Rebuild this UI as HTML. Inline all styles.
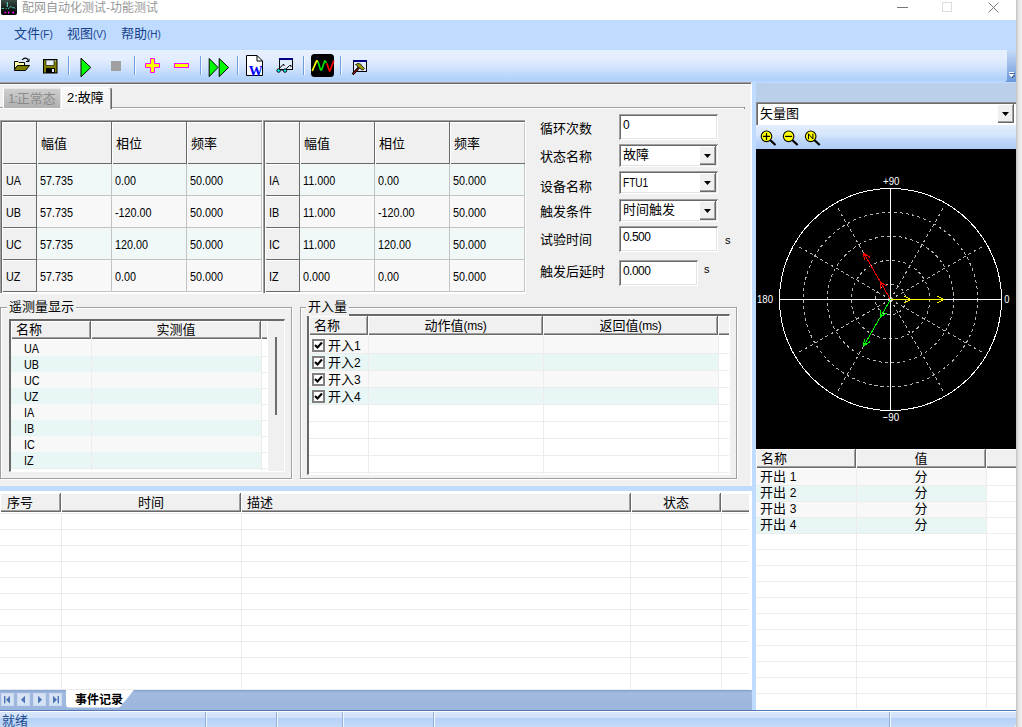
<!DOCTYPE html><html lang="zh-CN"><head><meta charset="utf-8"><title>配网自动化测试-功能测试</title><style>
html,body{margin:0;padding:0}
body{width:1022px;height:727px;overflow:hidden;background:#f0f0f0;position:relative;font-family:"Liberation Sans","Noto Sans CJK SC",sans-serif;font-size:13px;color:#000}
.a{position:absolute;box-sizing:border-box}
.t{white-space:nowrap}
.n{font-size:12px;letter-spacing:-0.6px}
.nx{font-size:12px;transform:scaleX(0.9);transform-origin:0 50%}
.hd{background:#f0f0f0;box-shadow:inset 1px 0 0 #fff,inset -1px 0 0 #696969,inset 0 1px 0 #fff,inset 0 -1px 0 #696969,inset -2px 0 0 #a0a0a0,inset 0 -2px 0 #a0a0a0}
.hdf{background:#f0f0f0;box-shadow:inset 1px 1px 0 #fff,inset 0 -1px 0 #696969,inset 0 -2px 0 #a0a0a0}
.hcl{background:#f0f0f0;box-shadow:inset 1px 1px 0 #fff,inset 0 -1px 0 #696969,inset -1px 0 0 #c3c3c3}
.hc{background:#f0f0f0;box-shadow:inset 1px 0 0 #fff,inset -1px 0 0 #696969,inset 0 1px 0 #fff,inset 0 -1px 0 #696969}
.sunk{background:#fff;box-shadow:inset 1px 1px 0 #a0a0a0,inset -1px -1px 0 #fff,inset 2px 2px 0 #696969,inset -2px -2px 0 #e3e3e3}
.btn{background:#f0f0f0;box-shadow:inset 1px 0 0 #fff,inset -1px 0 0 #696969,inset 0 1px 0 #fff,inset 0 -1px 0 #696969,inset -2px 0 0 #a0a0a0,inset 0 -2px 0 #a0a0a0}
.c0{background:#f0f8f8}
.c1{background:#f8f8f8}
.r0{background:#f8f8f8}
.r1{background:#e9f6f6}
.gl{background:#ececec}
.mi{color:#15428b}
.mi small{font-size:10px}
</style></head><body>
<div class="a " style="left:1016px;top:0px;width:6px;height:727px;background:linear-gradient(90deg,#bcbcbc 0,#d8d8d8 1.5px,#e8e8e8 3px,#eeeeee 6px)"></div>
<div class="a " style="left:0px;top:0px;width:1016px;height:20px;background:#fff"></div>
<svg class="a" style="left:1px;top:0" width="16" height="15" viewBox="0 0 16 15"><defs><linearGradient id="ig" x1="0" y1="0" x2="0" y2="1"><stop offset="0" stop-color="#3b4b46"/><stop offset="0.6" stop-color="#101a17"/><stop offset="1" stop-color="#000"/></linearGradient></defs><path d="M0 0H16V13Q16 15 14 15H2Q0 15 0 13Z" fill="url(#ig)"/><path d="M6.3 2V7" stroke="#6fe0d0" stroke-width="1"/><path d="M0.5 8.5H3M4.6 8.5H5.6M7 9L8 8L10 6.2L11.6 8L13 7.4L14.4 8.6" stroke="#5fbfb0" stroke-width="0.9" fill="none"/><path d="M2.8 12.4L5 11.6V13.6ZM7 11.4H8V13.8H7ZM8 12L9 12.6L8 13ZM10.4 12.2L13 11.4V13.8Z" fill="#ff00ff"/></svg>
<div class="a t " style="left:22px;top:0px;height:16px;line-height:16px;font-size:12px;color:#979797">配网自动化测试-功能测试</div>
<div class="a " style="left:897px;top:7px;width:11px;height:1px;background:#777"></div>
<div class="a " style="left:942px;top:2px;width:10px;height:10px;border:1px solid #dcdcdc"></div>
<svg class="a" style="left:988px;top:2px" width="11" height="11" viewBox="0 0 11 11"><path d="M0.5 0.5L10.5 10.5M10.5 0.5L0.5 10.5" stroke="#777" stroke-width="1" fill="none"/></svg>
<div class="a " style="left:0px;top:20px;width:1016px;height:30px;background:#bfdbff"></div>
<div class="a t mi" style="left:14px;top:25px;height:18px;line-height:18px;">文件<small>(F)</small></div>
<div class="a t mi" style="left:67px;top:25px;height:18px;line-height:18px;">视图<small>(V)</small></div>
<div class="a t mi" style="left:121px;top:25px;height:18px;line-height:18px;">帮助<small>(H)</small></div>
<div class="a " style="left:0px;top:50px;width:1016px;height:33px;background:#bfdbff"></div>
<div class="a " style="left:1000px;top:50px;width:16px;height:32px;background:linear-gradient(#c6daf6 0%,#a3c1ec 40%,#6a97db 100%)"></div>
<div class="a " style="left:0px;top:50px;width:1007px;height:32px;background:linear-gradient(#e6f0fe 0%,#e2edfe 30%,#d5e6fd 50%,#c2dafc 72%,#b0d1fc 92%,#b7d5fd 100%);border-radius:0 0 3px 0"></div>
<svg class="a" style="left:1008px;top:71px" width="8" height="8" viewBox="0 0 8 8"><path d="M2 2.5H7M2.5 4.5H6.5L4.5 6.8Z" stroke="#3a5f9f" stroke-width="1" fill="#3a5f9f"/><path d="M1 1.5H6M1.5 3.5H5.5L3.5 5.8Z" stroke="#fff" stroke-width="1" fill="#fff"/></svg>
<svg class="a" style="left:0;top:50px" width="400" height="33" viewBox="0 50 400 33"><rect x="68" y="56" width="1" height="19" fill="#6f9ede"/><rect x="69" y="56" width="1" height="19" fill="#f4f8fe"/><rect x="134" y="56" width="1" height="19" fill="#6f9ede"/><rect x="135" y="56" width="1" height="19" fill="#f4f8fe"/><rect x="200" y="56" width="1" height="19" fill="#6f9ede"/><rect x="201" y="56" width="1" height="19" fill="#f4f8fe"/><rect x="237" y="56" width="1" height="19" fill="#6f9ede"/><rect x="238" y="56" width="1" height="19" fill="#f4f8fe"/><rect x="303" y="56" width="1" height="19" fill="#6f9ede"/><rect x="304" y="56" width="1" height="19" fill="#f4f8fe"/><rect x="340" y="56" width="1" height="19" fill="#6f9ede"/><rect x="341" y="56" width="1" height="19" fill="#f4f8fe"/><path d="M14.5 61.5H18L19 62.5H24.5V65.5H17.5L14.5 69.5Z" fill="#ffffa8" stroke="#000" stroke-width="1"/><path d="M17.5 65.5H29.5L25.5 70.5H14.5V69.5Z" fill="#808000" stroke="#000" stroke-width="1" stroke-linejoin="round"/><path d="M22 60Q24.5 57.2 27 58.6L28.6 61" fill="none" stroke="#000" stroke-width="1.1"/><path d="M26 61.5H29V58.6" fill="none" stroke="#000" stroke-width="1"/><rect x="43.5" y="59.5" width="13.5" height="13.5" fill="#808000" stroke="#000" stroke-width="1"/><rect x="46" y="60" width="8" height="5.5" fill="#e4eefc" stroke="#000" stroke-width="0.6"/><rect x="46" y="68" width="9" height="5" fill="#000"/><rect x="52" y="69" width="2" height="3" fill="#e4eefc"/><rect x="55" y="60.5" width="1" height="1" fill="#e4eefc"/><path d="M81 58.2L90.8 67.5L81 76.8Z" fill="#00ff00" stroke="#000" stroke-width="1" stroke-linejoin="miter"/><rect x="111" y="61" width="10" height="10" fill="#a0a0a0"/><path d="M150.5 58.5H154.5V63.5H159.5V67.5H154.5V72.5H150.5V67.5H145.5V63.5H150.5Z" fill="#ffff00" stroke="#ff00ff" stroke-width="1"/><rect x="174.5" y="63.5" width="14" height="4" fill="#ffff00" stroke="#ff00ff" stroke-width="1"/><path d="M209.2 58.5L218 67.5L209.2 76.6Z" fill="#00ff00" stroke="#000" stroke-width="1"/><path d="M219.2 58.5L228.6 67.5L219.2 76.6Z" fill="#00ff00" stroke="#000" stroke-width="1"/><path d="M246.5 55.5H257L262.5 61V75.5H246.5Z" fill="#fff" stroke="#000" stroke-width="1"/><path d="M257 55.5V61H262.5" fill="none" stroke="#000" stroke-width="1"/><text x="255.8" y="75.6" text-anchor="middle" font-family="Liberation Serif,serif" font-weight="bold" font-size="14" fill="#0000ff">W</text><rect x="279.5" y="58.5" width="13" height="11" fill="#e2edfc" stroke="#000" stroke-width="1"/><rect x="279" y="58" width="14" height="2" fill="#000080"/><path d="M279 69L282.6 64.8L284 64.6V66M285.8 69L289.6 65.6L291 65.4V67" fill="none" stroke="#000" stroke-width="1"/><circle cx="278.6" cy="70.6" r="1.7" fill="#00ffff" stroke="#000" stroke-width="1"/><circle cx="285" cy="70.6" r="1.7" fill="#00ffff" stroke="#000" stroke-width="1"/><path d="M280.4 70H283.2" stroke="#000" stroke-width="1"/><rect x="311" y="54" width="23" height="23" rx="3.5" fill="#000"/><path d="M312.2 71L316.6 60.8L318 61.8" fill="none" stroke="#ffff00" stroke-width="1.7" stroke-linejoin="round"/><path d="M318 61.8L320.6 70L321.6 70L324.8 60.8L326.6 63" fill="none" stroke="#00e000" stroke-width="1.7" stroke-linejoin="round"/><path d="M326.8 63.4L329.4 70.8L330 70.8L333.7 60.8" fill="none" stroke="#ff0000" stroke-width="1.7" stroke-linejoin="round"/><rect x="353.5" y="60.5" width="13" height="11" fill="#e2edfc" stroke="#000" stroke-width="1"/><rect x="353" y="60" width="14" height="2" fill="#000080"/><path d="M352.6 74.4L358.8 67.6" stroke="#000" stroke-width="2.4"/><path d="M353 74L358.6 68" stroke="#c00000" stroke-width="1"/><path d="M355.4 64.6L358 63.4L360.6 64L362 66L364.6 68.6L363 70L361 69.6L360 68L358 67.6L357.2 65.4Z" fill="#999900" stroke="#000" stroke-width="0.7"/></svg>
<div class="a " style="left:0px;top:82px;width:752px;height:404px;background:#f0f0f0;border-top:1px solid #a0a0a0;border-right:1px solid #fff"></div>
<div class="a " style="left:0px;top:83px;width:751px;height:1px;background:#696969"></div>
<div class="a " style="left:0px;top:84px;width:751px;height:1px;background:#f9f9f9"></div>
<div class="a " style="left:750px;top:84px;width:1px;height:402px;background:#f8f8f8"></div>
<div class="a " style="left:0px;top:107px;width:3px;height:1px;background:#a0a0a0"></div>
<div class="a " style="left:0px;top:108px;width:3px;height:1px;background:#fff"></div>
<div class="a " style="left:112px;top:107px;width:633px;height:1px;background:#a0a0a0"></div>
<div class="a " style="left:112px;top:108px;width:632px;height:1px;background:#fff"></div>
<div class="a " style="left:744px;top:107px;width:1px;height:2px;background:#8a8a8a"></div>
<div class="a " style="left:3px;top:88px;width:58px;height:20px;background:linear-gradient(#cecece,#b0b0b0);border:1px solid #e6e6e6;border-left-color:#fff;border-bottom:0;border-radius:2px 2px 0 0"></div>
<div class="a " style="left:2px;top:108px;width:59px;height:1px;background:#fff"></div>
<div class="a t " style="left:8px;top:90px;height:18px;line-height:18px;color:#8a8a8a"><span style="letter-spacing:-1px">1:</span>正常态</div>
<div class="a " style="left:61px;top:87px;width:51px;height:22px;background:linear-gradient(#fafafa,#f2f2f2);border-left:1px solid #fff;border-top:1px solid #fff;border-right:1px solid #696969;box-shadow:inset -1px 0 0 #a0a0a0;border-radius:2px 3px 0 0"></div>
<div class="a t " style="left:67px;top:89px;height:18px;line-height:18px;">2:故障</div>
<div class="a " style="left:0px;top:120px;width:262px;height:173px;background:#fff;border-left:1px solid #a0a0a0;border-top:1px solid #a0a0a0;box-shadow:inset 1px 1px 0 #696969,1px 1px 0 #fff"></div>
<div class="a hc" style="left:2px;top:122px;width:35px;height:42px;"></div>
<div class="a hc" style="left:37px;top:122px;width:75px;height:42px;"></div>
<div class="a t " style="left:41px;top:122px;height:43px;line-height:43px;">幅值</div>
<div class="a hc" style="left:112px;top:122px;width:75px;height:42px;"></div>
<div class="a t " style="left:116px;top:122px;height:43px;line-height:43px;">相位</div>
<div class="a hcl" style="left:187px;top:122px;width:75px;height:42px;"></div>
<div class="a t " style="left:191px;top:122px;height:43px;line-height:43px;">频率</div>
<div class="a hc" style="left:2px;top:164px;width:35px;height:32px;"></div>
<div class="a t nx" style="left:6px;top:165px;height:32px;line-height:32px;">UA</div>
<div class="a c0" style="left:37px;top:164px;width:75px;height:32px;border-right:1px solid #c3c3c3;border-bottom:1px solid #c3c3c3"></div>
<div class="a t nx" style="left:40px;top:165px;height:32px;line-height:32px;">57.735</div>
<div class="a c0" style="left:112px;top:164px;width:75px;height:32px;border-right:1px solid #c3c3c3;border-bottom:1px solid #c3c3c3"></div>
<div class="a t nx" style="left:115px;top:165px;height:32px;line-height:32px;">0.00</div>
<div class="a c0" style="left:187px;top:164px;width:75px;height:32px;border-right:1px solid #c3c3c3;border-bottom:1px solid #c3c3c3"></div>
<div class="a t nx" style="left:190px;top:165px;height:32px;line-height:32px;">50.000</div>
<div class="a hc" style="left:2px;top:196px;width:35px;height:32px;"></div>
<div class="a t nx" style="left:6px;top:197px;height:32px;line-height:32px;">UB</div>
<div class="a c1" style="left:37px;top:196px;width:75px;height:32px;border-right:1px solid #c3c3c3;border-bottom:1px solid #c3c3c3"></div>
<div class="a t nx" style="left:40px;top:197px;height:32px;line-height:32px;">57.735</div>
<div class="a c1" style="left:112px;top:196px;width:75px;height:32px;border-right:1px solid #c3c3c3;border-bottom:1px solid #c3c3c3"></div>
<div class="a t nx" style="left:115px;top:197px;height:32px;line-height:32px;">-120.00</div>
<div class="a c1" style="left:187px;top:196px;width:75px;height:32px;border-right:1px solid #c3c3c3;border-bottom:1px solid #c3c3c3"></div>
<div class="a t nx" style="left:190px;top:197px;height:32px;line-height:32px;">50.000</div>
<div class="a hc" style="left:2px;top:228px;width:35px;height:32px;"></div>
<div class="a t nx" style="left:6px;top:229px;height:32px;line-height:32px;">UC</div>
<div class="a c0" style="left:37px;top:228px;width:75px;height:32px;border-right:1px solid #c3c3c3;border-bottom:1px solid #c3c3c3"></div>
<div class="a t nx" style="left:40px;top:229px;height:32px;line-height:32px;">57.735</div>
<div class="a c0" style="left:112px;top:228px;width:75px;height:32px;border-right:1px solid #c3c3c3;border-bottom:1px solid #c3c3c3"></div>
<div class="a t nx" style="left:115px;top:229px;height:32px;line-height:32px;">120.00</div>
<div class="a c0" style="left:187px;top:228px;width:75px;height:32px;border-right:1px solid #c3c3c3;border-bottom:1px solid #c3c3c3"></div>
<div class="a t nx" style="left:190px;top:229px;height:32px;line-height:32px;">50.000</div>
<div class="a hc" style="left:2px;top:260px;width:35px;height:32px;"></div>
<div class="a t nx" style="left:6px;top:261px;height:32px;line-height:32px;">UZ</div>
<div class="a c1" style="left:37px;top:260px;width:75px;height:32px;border-right:1px solid #c3c3c3;border-bottom:1px solid #c3c3c3"></div>
<div class="a t nx" style="left:40px;top:261px;height:32px;line-height:32px;">57.735</div>
<div class="a c1" style="left:112px;top:260px;width:75px;height:32px;border-right:1px solid #c3c3c3;border-bottom:1px solid #c3c3c3"></div>
<div class="a t nx" style="left:115px;top:261px;height:32px;line-height:32px;">0.00</div>
<div class="a c1" style="left:187px;top:260px;width:75px;height:32px;border-right:1px solid #c3c3c3;border-bottom:1px solid #c3c3c3"></div>
<div class="a t nx" style="left:190px;top:261px;height:32px;line-height:32px;">50.000</div>
<div class="a " style="left:263px;top:120px;width:262px;height:173px;background:#fff;border-left:1px solid #a0a0a0;border-top:1px solid #a0a0a0;box-shadow:inset 1px 1px 0 #696969,1px 1px 0 #fff"></div>
<div class="a hc" style="left:265px;top:122px;width:35px;height:42px;"></div>
<div class="a hc" style="left:300px;top:122px;width:75px;height:42px;"></div>
<div class="a t " style="left:304px;top:122px;height:43px;line-height:43px;">幅值</div>
<div class="a hc" style="left:375px;top:122px;width:75px;height:42px;"></div>
<div class="a t " style="left:379px;top:122px;height:43px;line-height:43px;">相位</div>
<div class="a hcl" style="left:450px;top:122px;width:75px;height:42px;"></div>
<div class="a t " style="left:454px;top:122px;height:43px;line-height:43px;">频率</div>
<div class="a hc" style="left:265px;top:164px;width:35px;height:32px;"></div>
<div class="a t nx" style="left:269px;top:165px;height:32px;line-height:32px;">IA</div>
<div class="a c0" style="left:300px;top:164px;width:75px;height:32px;border-right:1px solid #c3c3c3;border-bottom:1px solid #c3c3c3"></div>
<div class="a t nx" style="left:303px;top:165px;height:32px;line-height:32px;">11.000</div>
<div class="a c0" style="left:375px;top:164px;width:75px;height:32px;border-right:1px solid #c3c3c3;border-bottom:1px solid #c3c3c3"></div>
<div class="a t nx" style="left:378px;top:165px;height:32px;line-height:32px;">0.00</div>
<div class="a c0" style="left:450px;top:164px;width:75px;height:32px;border-right:1px solid #c3c3c3;border-bottom:1px solid #c3c3c3"></div>
<div class="a t nx" style="left:453px;top:165px;height:32px;line-height:32px;">50.000</div>
<div class="a hc" style="left:265px;top:196px;width:35px;height:32px;"></div>
<div class="a t nx" style="left:269px;top:197px;height:32px;line-height:32px;">IB</div>
<div class="a c1" style="left:300px;top:196px;width:75px;height:32px;border-right:1px solid #c3c3c3;border-bottom:1px solid #c3c3c3"></div>
<div class="a t nx" style="left:303px;top:197px;height:32px;line-height:32px;">11.000</div>
<div class="a c1" style="left:375px;top:196px;width:75px;height:32px;border-right:1px solid #c3c3c3;border-bottom:1px solid #c3c3c3"></div>
<div class="a t nx" style="left:378px;top:197px;height:32px;line-height:32px;">-120.00</div>
<div class="a c1" style="left:450px;top:196px;width:75px;height:32px;border-right:1px solid #c3c3c3;border-bottom:1px solid #c3c3c3"></div>
<div class="a t nx" style="left:453px;top:197px;height:32px;line-height:32px;">50.000</div>
<div class="a hc" style="left:265px;top:228px;width:35px;height:32px;"></div>
<div class="a t nx" style="left:269px;top:229px;height:32px;line-height:32px;">IC</div>
<div class="a c0" style="left:300px;top:228px;width:75px;height:32px;border-right:1px solid #c3c3c3;border-bottom:1px solid #c3c3c3"></div>
<div class="a t nx" style="left:303px;top:229px;height:32px;line-height:32px;">11.000</div>
<div class="a c0" style="left:375px;top:228px;width:75px;height:32px;border-right:1px solid #c3c3c3;border-bottom:1px solid #c3c3c3"></div>
<div class="a t nx" style="left:378px;top:229px;height:32px;line-height:32px;">120.00</div>
<div class="a c0" style="left:450px;top:228px;width:75px;height:32px;border-right:1px solid #c3c3c3;border-bottom:1px solid #c3c3c3"></div>
<div class="a t nx" style="left:453px;top:229px;height:32px;line-height:32px;">50.000</div>
<div class="a hc" style="left:265px;top:260px;width:35px;height:32px;"></div>
<div class="a t nx" style="left:269px;top:261px;height:32px;line-height:32px;">IZ</div>
<div class="a c1" style="left:300px;top:260px;width:75px;height:32px;border-right:1px solid #c3c3c3;border-bottom:1px solid #c3c3c3"></div>
<div class="a t nx" style="left:303px;top:261px;height:32px;line-height:32px;">0.000</div>
<div class="a c1" style="left:375px;top:260px;width:75px;height:32px;border-right:1px solid #c3c3c3;border-bottom:1px solid #c3c3c3"></div>
<div class="a t nx" style="left:378px;top:261px;height:32px;line-height:32px;">0.00</div>
<div class="a c1" style="left:450px;top:260px;width:75px;height:32px;border-right:1px solid #c3c3c3;border-bottom:1px solid #c3c3c3"></div>
<div class="a t nx" style="left:453px;top:261px;height:32px;line-height:32px;">50.000</div>
<div class="a t " style="left:540px;top:119px;height:20px;line-height:20px;">循环次数</div>
<div class="a t " style="left:540px;top:147px;height:20px;line-height:20px;">状态名称</div>
<div class="a t " style="left:540px;top:177px;height:20px;line-height:20px;">设备名称</div>
<div class="a t " style="left:540px;top:202px;height:20px;line-height:20px;">触发条件</div>
<div class="a t " style="left:540px;top:230px;height:20px;line-height:20px;">试验时间</div>
<div class="a t " style="left:540px;top:262px;height:20px;line-height:20px;">触发后延时</div>
<div class="a sunk" style="left:619px;top:114px;width:99px;height:26px;"></div>
<div class="a t " style="left:623px;top:116px;height:18px;line-height:18px;font-size:12px;letter-spacing:-0.55px">0</div>
<div class="a sunk" style="left:619px;top:144px;width:99px;height:23px;"></div>
<div class="a btn" style="left:699px;top:146px;width:17px;height:19px;"></div>
<svg class="a" style="left:704px;top:154px" width="7" height="4" viewBox="0 0 7 4"><path d="M0 0H7L3.5 4Z" fill="#000"/></svg>
<div class="a t " style="left:623px;top:145px;height:19px;line-height:19px;">故障</div>
<div class="a sunk" style="left:619px;top:171px;width:99px;height:23px;"></div>
<div class="a btn" style="left:699px;top:173px;width:17px;height:19px;"></div>
<svg class="a" style="left:704px;top:181px" width="7" height="4" viewBox="0 0 7 4"><path d="M0 0H7L3.5 4Z" fill="#000"/></svg>
<div class="a t " style="left:623px;top:172px;height:19px;line-height:19px;font-size:12px;padding-top:2px;transform:scaleX(0.84);transform-origin:0 0">FTU1</div>
<div class="a sunk" style="left:619px;top:199px;width:99px;height:23px;"></div>
<div class="a btn" style="left:699px;top:201px;width:17px;height:19px;"></div>
<svg class="a" style="left:704px;top:209px" width="7" height="4" viewBox="0 0 7 4"><path d="M0 0H7L3.5 4Z" fill="#000"/></svg>
<div class="a t " style="left:623px;top:200px;height:19px;line-height:19px;">时间触发</div>
<div class="a sunk" style="left:619px;top:226px;width:99px;height:26px;"></div>
<div class="a t " style="left:623px;top:228px;height:18px;line-height:18px;font-size:12px;letter-spacing:-0.55px">0.500</div>
<div class="a sunk" style="left:619px;top:260px;width:79px;height:26px;"></div>
<div class="a t " style="left:623px;top:262px;height:18px;line-height:18px;font-size:12px;letter-spacing:-0.55px">0.000</div>
<div class="a t " style="left:725px;top:231px;height:18px;line-height:18px;font-size:11px">s</div>
<div class="a t " style="left:704px;top:260px;height:18px;line-height:18px;font-size:11px">s</div>
<div class="a " style="left:0px;top:307px;width:292px;height:172px;border:1px solid #a0a0a0;box-shadow:1px 1px 0 #fff, inset 1px 1px 0 #fff"></div>
<div class="a t " style="left:7px;top:299px;height:16px;line-height:16px;background:#f0f0f0;padding:0 2px">遥测量显示</div>
<div class="a " style="left:300px;top:307px;width:437px;height:172px;border:1px solid #a0a0a0;box-shadow:1px 1px 0 #fff, inset 1px 1px 0 #fff"></div>
<div class="a " style="left:9px;top:319px;width:276px;height:153px;background:#fff;border-left:2px solid #696969;border-top:2px solid #696969;border-right:1px solid #fff;border-bottom:1px solid #fff"></div>
<div class="a " style="left:268px;top:321px;width:16px;height:150px;background:#f0f0f0"></div>
<div class="a " style="left:275px;top:337px;width:2px;height:78px;background:#6e6e6e"></div>
<div class="a hd" style="left:11px;top:321px;width:80px;height:18px;"></div>
<div class="a t " style="left:16px;top:321px;height:18px;line-height:18px;">名称</div>
<div class="a hd" style="left:91px;top:321px;width:170px;height:18px;"></div>
<div class="a t " style="left:91px;top:321px;height:18px;line-height:18px;width:170px;text-align:center">实测值</div>
<div class="a hdf" style="left:261px;top:321px;width:6px;height:18px;"></div>
<div class="a r0" style="left:11px;top:340px;width:250px;height:16px;"></div>
<div class="a t nx" style="left:24px;top:341px;height:16px;line-height:16px;">UA</div>
<div class="a gl" style="left:11px;top:356px;width:256px;height:1px;"></div>
<div class="a r1" style="left:11px;top:356px;width:250px;height:16px;"></div>
<div class="a t nx" style="left:24px;top:357px;height:16px;line-height:16px;">UB</div>
<div class="a gl" style="left:11px;top:372px;width:256px;height:1px;"></div>
<div class="a r0" style="left:11px;top:372px;width:250px;height:16px;"></div>
<div class="a t nx" style="left:24px;top:373px;height:16px;line-height:16px;">UC</div>
<div class="a gl" style="left:11px;top:388px;width:256px;height:1px;"></div>
<div class="a r1" style="left:11px;top:388px;width:250px;height:16px;"></div>
<div class="a t nx" style="left:24px;top:389px;height:16px;line-height:16px;">UZ</div>
<div class="a gl" style="left:11px;top:404px;width:256px;height:1px;"></div>
<div class="a r0" style="left:11px;top:404px;width:250px;height:16px;"></div>
<div class="a t nx" style="left:24px;top:405px;height:16px;line-height:16px;">IA</div>
<div class="a gl" style="left:11px;top:420px;width:256px;height:1px;"></div>
<div class="a r1" style="left:11px;top:420px;width:250px;height:16px;"></div>
<div class="a t nx" style="left:24px;top:421px;height:16px;line-height:16px;">IB</div>
<div class="a gl" style="left:11px;top:436px;width:256px;height:1px;"></div>
<div class="a r0" style="left:11px;top:436px;width:250px;height:16px;"></div>
<div class="a t nx" style="left:24px;top:437px;height:16px;line-height:16px;">IC</div>
<div class="a gl" style="left:11px;top:452px;width:256px;height:1px;"></div>
<div class="a r1" style="left:11px;top:452px;width:250px;height:16px;"></div>
<div class="a t nx" style="left:24px;top:453px;height:16px;line-height:16px;">IZ</div>
<div class="a gl" style="left:11px;top:468px;width:256px;height:1px;"></div>
<div class="a gl" style="left:91px;top:339px;width:1px;height:132px;"></div>
<div class="a gl" style="left:261px;top:339px;width:1px;height:132px;"></div>
<div class="a " style="left:307px;top:314px;width:423px;height:161px;background:#fff;border-left:2px solid #696969;border-top:2px solid #696969;border-right:1px solid #fff;border-bottom:1px solid #fff"></div>
<div class="a hd" style="left:309px;top:316px;width:59px;height:19px;"></div>
<div class="a t " style="left:314px;top:316px;height:19px;line-height:19px;">名称</div>
<div class="a hd" style="left:368px;top:316px;width:175px;height:19px;"></div>
<div class="a t " style="left:368px;top:316px;height:19px;line-height:19px;width:175px;text-align:center">动作值<span class="n" style="letter-spacing:-0.3px">(ms)</span></div>
<div class="a hd" style="left:543px;top:316px;width:175px;height:19px;"></div>
<div class="a t " style="left:543px;top:316px;height:19px;line-height:19px;width:175px;text-align:center">返回值<span class="n" style="letter-spacing:-0.3px">(ms)</span></div>
<div class="a hdf" style="left:718px;top:316px;width:11px;height:19px;"></div>
<div class="a r0" style="left:309px;top:336px;width:409px;height:17px;"></div>
<div class="a " style="left:312px;top:339px;width:13px;height:13px;background:#fff;border:2px solid #808080"></div>
<svg class="a" style="left:314px;top:341px" width="9" height="9" viewBox="0 0 9 9"><path d="M1 4L3.5 6.5L8 1.5" stroke="#000" stroke-width="2.1" fill="none"/></svg>
<div class="a t " style="left:328px;top:337px;height:17px;line-height:17px;">开入<span class="n">1</span></div>
<div class="a r1" style="left:309px;top:353px;width:409px;height:17px;"></div>
<div class="a " style="left:312px;top:356px;width:13px;height:13px;background:#fff;border:2px solid #808080"></div>
<svg class="a" style="left:314px;top:358px" width="9" height="9" viewBox="0 0 9 9"><path d="M1 4L3.5 6.5L8 1.5" stroke="#000" stroke-width="2.1" fill="none"/></svg>
<div class="a t " style="left:328px;top:354px;height:17px;line-height:17px;">开入<span class="n">2</span></div>
<div class="a r0" style="left:309px;top:370px;width:409px;height:17px;"></div>
<div class="a " style="left:312px;top:373px;width:13px;height:13px;background:#fff;border:2px solid #808080"></div>
<svg class="a" style="left:314px;top:375px" width="9" height="9" viewBox="0 0 9 9"><path d="M1 4L3.5 6.5L8 1.5" stroke="#000" stroke-width="2.1" fill="none"/></svg>
<div class="a t " style="left:328px;top:371px;height:17px;line-height:17px;">开入<span class="n">3</span></div>
<div class="a r1" style="left:309px;top:387px;width:409px;height:17px;"></div>
<div class="a " style="left:312px;top:390px;width:13px;height:13px;background:#fff;border:2px solid #808080"></div>
<svg class="a" style="left:314px;top:392px" width="9" height="9" viewBox="0 0 9 9"><path d="M1 4L3.5 6.5L8 1.5" stroke="#000" stroke-width="2.1" fill="none"/></svg>
<div class="a t " style="left:328px;top:388px;height:17px;line-height:17px;">开入<span class="n">4</span></div>
<div class="a gl" style="left:309px;top:353px;width:420px;height:1px;"></div>
<div class="a gl" style="left:309px;top:370px;width:420px;height:1px;"></div>
<div class="a gl" style="left:309px;top:387px;width:420px;height:1px;"></div>
<div class="a gl" style="left:309px;top:404px;width:420px;height:1px;"></div>
<div class="a gl" style="left:309px;top:421px;width:420px;height:1px;"></div>
<div class="a gl" style="left:309px;top:438px;width:420px;height:1px;"></div>
<div class="a gl" style="left:309px;top:455px;width:420px;height:1px;"></div>
<div class="a gl" style="left:309px;top:472px;width:420px;height:1px;"></div>
<div class="a gl" style="left:368px;top:336px;width:1px;height:138px;"></div>
<div class="a gl" style="left:543px;top:336px;width:1px;height:138px;"></div>
<div class="a gl" style="left:718px;top:336px;width:1px;height:138px;"></div>
<div class="a t " style="left:306px;top:299px;height:17px;line-height:17px;background:#f0f0f0;padding:0 2px;width:43px;line-height:16px">开入量</div>
<div class="a " style="left:0px;top:486px;width:752px;height:5px;background:#bfdbff"></div>
<div class="a " style="left:0px;top:491px;width:752px;height:199px;background:#fff"></div>
<div class="a hdf" style="left:721px;top:493px;width:28px;height:19px;"></div>
<div class="a hd" style="left:0px;top:493px;width:61px;height:19px;"></div>
<div class="a t " style="left:7px;top:493px;height:19px;line-height:19px;">序号</div>
<div class="a hd" style="left:61px;top:493px;width:180px;height:19px;"></div>
<div class="a t " style="left:61px;top:493px;height:19px;line-height:19px;width:180px;text-align:center">时间</div>
<div class="a hd" style="left:241px;top:493px;width:390px;height:19px;"></div>
<div class="a t " style="left:247px;top:493px;height:19px;line-height:19px;">描述</div>
<div class="a hd" style="left:631px;top:493px;width:90px;height:19px;"></div>
<div class="a t " style="left:631px;top:493px;height:19px;line-height:19px;width:90px;text-align:center">状态</div>
<div class="a gl" style="left:0px;top:529px;width:749px;height:1px;"></div>
<div class="a gl" style="left:0px;top:545px;width:749px;height:1px;"></div>
<div class="a gl" style="left:0px;top:561px;width:749px;height:1px;"></div>
<div class="a gl" style="left:0px;top:577px;width:749px;height:1px;"></div>
<div class="a gl" style="left:0px;top:593px;width:749px;height:1px;"></div>
<div class="a gl" style="left:0px;top:609px;width:749px;height:1px;"></div>
<div class="a gl" style="left:0px;top:625px;width:749px;height:1px;"></div>
<div class="a gl" style="left:0px;top:641px;width:749px;height:1px;"></div>
<div class="a gl" style="left:0px;top:657px;width:749px;height:1px;"></div>
<div class="a gl" style="left:0px;top:673px;width:749px;height:1px;"></div>
<div class="a gl" style="left:0px;top:689px;width:749px;height:1px;"></div>
<div class="a gl" style="left:0px;top:513px;width:749px;height:1px;"></div>
<div class="a gl" style="left:61px;top:513px;width:1px;height:177px;"></div>
<div class="a gl" style="left:241px;top:513px;width:1px;height:177px;"></div>
<div class="a gl" style="left:630px;top:513px;width:1px;height:177px;"></div>
<div class="a gl" style="left:721px;top:513px;width:1px;height:177px;"></div>
<div class="a " style="left:0px;top:690px;width:752px;height:20px;background:linear-gradient(#7f9fd0 0,#8eabd8 1px,#a3bae0 3px,#9fb8df 10px,#9bb5dd 20px)"></div>
<div class="a " style="left:1px;top:693px;width:13px;height:13px;background:#d5e3f4;border:1px solid #cbdaf0"></div>
<div class="a " style="left:17px;top:693px;width:13px;height:13px;background:#d5e3f4;border:1px solid #cbdaf0"></div>
<div class="a " style="left:33px;top:693px;width:13px;height:13px;background:#d5e3f4;border:1px solid #cbdaf0"></div>
<div class="a " style="left:49px;top:693px;width:13px;height:13px;background:#d5e3f4;border:1px solid #cbdaf0"></div>
<svg class="a" style="left:0;top:690px" width="64" height="20" viewBox="0 690 64 20"><rect x="4" y="696" width="1.4" height="7.4" fill="#4a72b5"/><path d="M10 695.8V703.6L6 699.7Z" fill="#4a72b5"/><path d="M25 695.8V703.6L21 699.7Z" fill="#4a72b5"/><path d="M38 695.8V703.6L42 699.7Z" fill="#4a72b5"/><path d="M53 695.8V703.6L57 699.7Z" fill="#4a72b5"/><rect x="57.6" y="696" width="1.4" height="7.4" fill="#4a72b5"/></svg>
<svg class="a" style="left:64px;top:690px" width="70" height="18" viewBox="0 0 70 18"><path d="M0 0H70L57 16Q56 17.5 53 17.5H5Q2 17.5 2 14V0Z" fill="#fff"/></svg>
<div class="a t " style="left:75px;top:692px;height:16px;line-height:16px;font-size:12px;font-weight:bold">事件记录</div>
<div class="a " style="left:752px;top:83px;width:4px;height:627px;background:#bfdbff"></div>
<div class="a " style="left:756px;top:83px;width:260px;height:19px;background:#b9cfea"></div>
<div class="a " style="left:756px;top:102px;width:260px;height:23px;background:#fff;border-top:1px solid #8c8c8c;border-left:1px solid #8c8c8c;box-shadow:inset 1px 1px 0 #696969"></div>
<div class="a t " style="left:760px;top:105px;height:18px;line-height:18px;">矢量图</div>
<div class="a btn" style="left:997px;top:104px;width:17px;height:19px;"></div>
<svg class="a" style="left:1002px;top:112px" width="7" height="4" viewBox="0 0 7 4"><path d="M0 0H7L3.5 4Z" fill="#000"/></svg>
<div class="a " style="left:756px;top:125px;width:260px;height:24px;background:linear-gradient(#e3edfc 0%,#d6e6fc 40%,#c0d8f9 62%,#adccf7 100%)"></div>
<svg class="a" style="left:756px;top:124px" width="80" height="25" viewBox="756 124 80 25"><path d="M770.1 140L775.5 145" stroke="#000" stroke-width="2.2"/><circle cx="766.5" cy="136.3" r="5.3" fill="#ffff00" stroke="#000" stroke-width="1.1"/><path d="M763.0 136.4H770.0M766.5 132.9V139.9" stroke="#000" stroke-width="1.2"/><path d="M792.2 140L797.6 145" stroke="#000" stroke-width="2.2"/><circle cx="788.6" cy="136.3" r="5.3" fill="#ffff00" stroke="#000" stroke-width="1.1"/><path d="M785.1 136.4H792.1" stroke="#000" stroke-width="1.2"/><path d="M814.3000000000001 140L819.7 145" stroke="#000" stroke-width="2.2"/><circle cx="810.7" cy="136.3" r="5.3" fill="#ffff00" stroke="#000" stroke-width="1.1"/><path d="M808.5 139.2V133.8L812.9000000000001 139V133.6" stroke="#000" stroke-width="1" fill="none"/></svg>
<div class="a " style="left:756px;top:149px;width:260px;height:300px;background:#000"></div>
<svg class="a" style="left:756px;top:149px" width="260" height="300" viewBox="0 0 260 300" shape-rendering="crispEdges"><circle cx="134.5" cy="150.5" r="15.3" stroke="#b4b4b4" stroke-width="1" stroke-dasharray="3 3" fill="none"/><circle cx="134.5" cy="150.5" r="39.3" stroke="#b4b4b4" stroke-width="1" stroke-dasharray="3 3" fill="none"/><circle cx="134.5" cy="150.5" r="63.3" stroke="#b4b4b4" stroke-width="1" stroke-dasharray="3 3" fill="none"/><circle cx="134.5" cy="150.5" r="87.3" stroke="#b4b4b4" stroke-width="1" stroke-dasharray="3 3" fill="none"/><path d="M134.5 150.5L227.2 97.0" stroke="#b4b4b4" stroke-width="1" stroke-dasharray="3 3" fill="none"/><path d="M134.5 150.5L188.0 57.8" stroke="#b4b4b4" stroke-width="1" stroke-dasharray="3 3" fill="none"/><path d="M134.5 150.5L81.0 57.8" stroke="#b4b4b4" stroke-width="1" stroke-dasharray="3 3" fill="none"/><path d="M134.5 150.5L41.8 97.0" stroke="#b4b4b4" stroke-width="1" stroke-dasharray="3 3" fill="none"/><path d="M134.5 150.5L41.8 204.0" stroke="#b4b4b4" stroke-width="1" stroke-dasharray="3 3" fill="none"/><path d="M134.5 150.5L81.0 243.2" stroke="#b4b4b4" stroke-width="1" stroke-dasharray="3 3" fill="none"/><path d="M134.5 150.5L188.0 243.2" stroke="#b4b4b4" stroke-width="1" stroke-dasharray="3 3" fill="none"/><path d="M134.5 150.5L227.2 204.0" stroke="#b4b4b4" stroke-width="1" stroke-dasharray="3 3" fill="none"/><circle cx="134.5" cy="150.5" r="111" stroke="#fff" stroke-width="1" fill="none"/><path d="M23.5 150.5H245.5M134.5 39.5V261.5" stroke="#fff" stroke-width="1" fill="none"/><path d="M134.5 150.5L187.9 150.5M181.4 153.8L187.9 150.5L181.4 147.2" stroke="#ffff00" stroke-width="1" fill="none"/><path d="M134.5 150.5L154.7 150.5M148.2 153.8L154.7 150.5L148.2 147.2" stroke="#ffff00" stroke-width="1" fill="none"/><path d="M134.5 150.5L107.8 104.3M113.9 108.2L107.8 104.3L108.2 111.5" stroke="#ff0000" stroke-width="1" fill="none"/><path d="M134.5 150.5L124.4 133.0M130.5 137.0L124.4 133.0L124.8 140.3" stroke="#ff0000" stroke-width="1" fill="none"/><path d="M134.5 150.5L107.8 196.7M108.2 189.5L107.8 196.7L113.9 192.8" stroke="#00ff00" stroke-width="1" fill="none"/><path d="M134.5 150.5L124.4 168.0M124.8 160.7L124.4 168.0L130.5 164.0" stroke="#00ff00" stroke-width="1" fill="none"/><text x="127" y="36" textLength="16.4" font-family="Liberation Sans,sans-serif" font-size="11" fill="#fff" lengthAdjust="spacingAndGlyphs">+90</text><text x="126.2" y="272" font-family="Liberation Sans,sans-serif" font-size="11" fill="#fff" lengthAdjust="spacingAndGlyphs"><tspan textLength="6" lengthAdjust="spacingAndGlyphs" dy="-1">-</tspan><tspan textLength="11" lengthAdjust="spacingAndGlyphs" dy="1">90</tspan></text><text x="1" y="154" textLength="16" font-family="Liberation Sans,sans-serif" font-size="11" fill="#fff" lengthAdjust="spacingAndGlyphs">180</text><text x="248.3" y="154" textLength="5.2" font-family="Liberation Sans,sans-serif" font-size="11" fill="#fff" lengthAdjust="spacingAndGlyphs">0</text></svg>
<div class="a " style="left:756px;top:449px;width:260px;height:261px;background:#fff"></div>
<div class="a hd" style="left:756px;top:449px;width:100px;height:19px;"></div>
<div class="a t " style="left:761px;top:449px;height:19px;line-height:19px;">名称</div>
<div class="a hd" style="left:856px;top:449px;width:130px;height:19px;"></div>
<div class="a t " style="left:856px;top:449px;height:19px;line-height:19px;width:130px;text-align:center">值</div>
<div class="a hdf" style="left:986px;top:449px;width:30px;height:19px;"></div>
<div class="a r0" style="left:756px;top:469px;width:230px;height:16px;"></div>
<div class="a t " style="left:760px;top:469px;height:16px;line-height:16px;">开出 <span class="n">1</span></div>
<div class="a t " style="left:856px;top:469px;height:16px;line-height:16px;width:130px;text-align:center">分</div>
<div class="a r1" style="left:756px;top:485px;width:230px;height:16px;"></div>
<div class="a t " style="left:760px;top:485px;height:16px;line-height:16px;">开出 <span class="n">2</span></div>
<div class="a t " style="left:856px;top:485px;height:16px;line-height:16px;width:130px;text-align:center">分</div>
<div class="a r0" style="left:756px;top:501px;width:230px;height:16px;"></div>
<div class="a t " style="left:760px;top:501px;height:16px;line-height:16px;">开出 <span class="n">3</span></div>
<div class="a t " style="left:856px;top:501px;height:16px;line-height:16px;width:130px;text-align:center">分</div>
<div class="a r1" style="left:756px;top:517px;width:230px;height:16px;"></div>
<div class="a t " style="left:760px;top:517px;height:16px;line-height:16px;">开出 <span class="n">4</span></div>
<div class="a t " style="left:856px;top:517px;height:16px;line-height:16px;width:130px;text-align:center">分</div>
<div class="a gl" style="left:756px;top:485px;width:260px;height:1px;"></div>
<div class="a gl" style="left:756px;top:501px;width:260px;height:1px;"></div>
<div class="a gl" style="left:756px;top:517px;width:260px;height:1px;"></div>
<div class="a gl" style="left:756px;top:533px;width:260px;height:1px;"></div>
<div class="a gl" style="left:756px;top:549px;width:260px;height:1px;"></div>
<div class="a gl" style="left:756px;top:565px;width:260px;height:1px;"></div>
<div class="a gl" style="left:756px;top:581px;width:260px;height:1px;"></div>
<div class="a gl" style="left:756px;top:597px;width:260px;height:1px;"></div>
<div class="a gl" style="left:756px;top:613px;width:260px;height:1px;"></div>
<div class="a gl" style="left:756px;top:629px;width:260px;height:1px;"></div>
<div class="a gl" style="left:756px;top:645px;width:260px;height:1px;"></div>
<div class="a gl" style="left:756px;top:661px;width:260px;height:1px;"></div>
<div class="a gl" style="left:756px;top:677px;width:260px;height:1px;"></div>
<div class="a gl" style="left:756px;top:693px;width:260px;height:1px;"></div>
<div class="a gl" style="left:856px;top:469px;width:1px;height:240px;"></div>
<div class="a gl" style="left:986px;top:469px;width:1px;height:240px;"></div>
<div class="a " style="left:0px;top:710px;width:1016px;height:17px;background:#b6d2f6;border-top:1px solid #5078b3;border-radius:0 0 4px 0"></div>
<div class="a " style="left:0px;top:711px;width:1016px;height:1px;background:#fff"></div>
<div class="a " style="left:0px;top:712px;width:1016px;height:6px;background:linear-gradient(#d6e5fa,#d0e1f9)"></div>
<div class="a " style="left:0px;top:718px;width:1016px;height:9px;background:linear-gradient(#b5d1f6,#c3daf8);border-radius:0 0 4px 0"></div>
<div class="a " style="left:205px;top:712px;width:1px;height:15px;background:#93b0dc"></div>
<div class="a " style="left:206px;top:712px;width:1px;height:15px;background:#f0f6fd"></div>
<div class="a " style="left:276px;top:712px;width:1px;height:15px;background:#93b0dc"></div>
<div class="a " style="left:277px;top:712px;width:1px;height:15px;background:#f0f6fd"></div>
<div class="a " style="left:342px;top:712px;width:1px;height:15px;background:#93b0dc"></div>
<div class="a " style="left:343px;top:712px;width:1px;height:15px;background:#f0f6fd"></div>
<div class="a " style="left:433px;top:712px;width:1px;height:15px;background:#93b0dc"></div>
<div class="a " style="left:434px;top:712px;width:1px;height:15px;background:#f0f6fd"></div>
<div class="a " style="left:889px;top:712px;width:1px;height:15px;background:#93b0dc"></div>
<div class="a " style="left:890px;top:712px;width:1px;height:15px;background:#f0f6fd"></div>
<div class="a t " style="left:2px;top:713px;height:16px;line-height:16px;color:#1e4a8f">就绪</div>
</body></html>
